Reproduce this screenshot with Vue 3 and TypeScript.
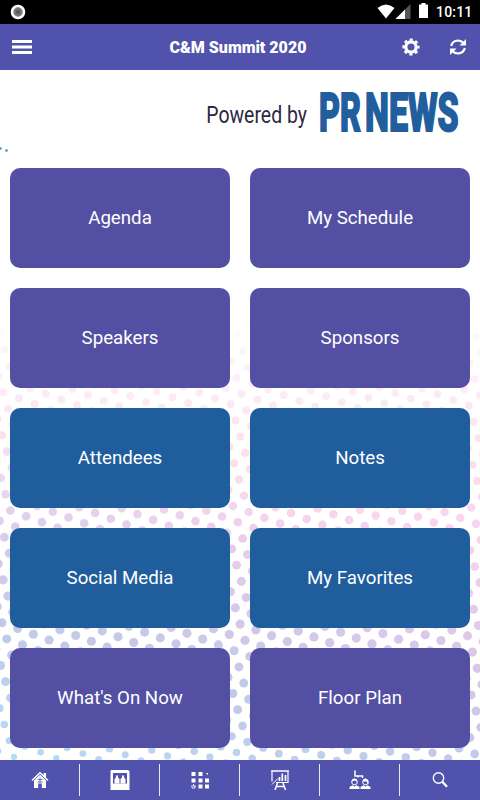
<script setup lang="ts">
interface Tile {
  label: string
  tone: 'violet' | 'blue'
}
interface Dot {
  x: number
  y: number
  r: number
  fill: string
  opacity: number
}

const tiles: Tile[] = [
  { label: 'Agenda', tone: 'violet' },
  { label: 'My Schedule', tone: 'violet' },
  { label: 'Speakers', tone: 'violet' },
  { label: 'Sponsors', tone: 'violet' },
  { label: 'Attendees', tone: 'blue' },
  { label: 'Notes', tone: 'blue' },
  { label: 'Social Media', tone: 'blue' },
  { label: 'My Favorites', tone: 'blue' },
  { label: "What's On Now", tone: 'violet' },
  { label: 'Floor Plan', tone: 'violet' },
]

// Piecewise linear interpolation over [position, ...values] stops.
function mix(stops: number[][], at: number): number[] {
  if (at <= stops[0][0]) return stops[0].slice(1)
  for (let i = 1; i < stops.length; i++) {
    const lo = stops[i - 1]
    const hi = stops[i]
    if (at <= hi[0]) {
      const t = (at - lo[0]) / (hi[0] - lo[0])
      return lo.slice(1).map((v, k) => v + (hi[k + 1] - v) * t)
    }
  }
  return stops[stops.length - 1].slice(1)
}

const hues = [
  [400, 249, 206, 234],
  [505, 220, 200, 233],
  [620, 193, 201, 232],
  [690, 188, 210, 239],
  [755, 178, 219, 246],
]
const fade = [[310, 0], [350, 0.2], [400, 0.45], [460, 0.65], [540, 0.93], [640, 1]]
const radii = [[310, 3.8], [400, 4], [500, 4.3], [600, 4.6], [690, 4.4], [720, 3.9], [760, 3]]

const dots: Dot[] = []
for (let i = -30; i <= 30; i++) {
  for (let j = -45; j <= 30; j++) {
    const x = 245 + i * 15.72 + j * 4.83
    const y = 640.3 + i * 5.8 + j * 16.2
    if (x < -6 || x > 486 || y < 310 || y > 766) continue
    const rgb = mix(hues, y - 0.3 * x).map(Math.round)
    dots.push({
      x,
      y,
      r: mix(radii, y - 0.12 * x)[0],
      fill: `rgb(${rgb.join(',')})`,
      opacity: mix(fade, y)[0],
    })
  }
}
</script>

<template>
  <div class="screen">
    <div class="status">
      <svg class="record" width="16" height="16" viewBox="0 0 16 16">
        <circle cx="8" cy="8" r="6" fill="#777" stroke="#fff" stroke-width="2.6" />
        <circle cx="8" cy="8" r="2" fill="#555" />
      </svg>
      <svg width="52" height="24" viewBox="0 0 52 24">
        <path d="M.5 8Q9 1 17.5 8L9 18.500Z" fill="#fff" />
        <path d="M33.500 4v15h-15Z" fill="#55555a" />
        <path d="M28 9.500v9.500h-9.500Z" fill="#fff" />
        <path d="M42 4.500h2.500v-1.500h4v1.500h2.500v13.500h-9Z" fill="#fff" />
      </svg>
      <span class="clock">10:11</span>
    </div>

    <header class="bar">
      <svg class="menu" width="20" height="14" viewBox="0 0 20 14">
        <path d="M0 0h20v3H0zM0 5.500h20v3H0zM0 11h20v3H0z" fill="#fff" />
      </svg>
      <h1>C&amp;M Summit 2020</h1>
      <div class="actions">
        <svg width="18" height="18" viewBox="0 0 18 18" fill="none" stroke="#fff">
          <circle cx="9" cy="9" r="5.200" stroke-width="3.200" />
          <circle cx="9" cy="9" r="7.400" stroke-width="2.400" stroke-dasharray="3.100 2.710" stroke-dashoffset="1.550" />
        </svg>
        <svg width="18" height="18" viewBox="0 0 18 18" fill="none" stroke="#fff" stroke-width="2.200">
          <path d="M2.200 8A7 6.600 0 0 1 14.500 5M15.800 10A7 6.600 0 0 1 3.500 13" />
          <path d="M17 1v6.500h-6.500ZM1 17v-6.500h6.500Z" fill="#fff" stroke="none" />
        </svg>
      </div>
    </header>

    <main class="body">
      <svg class="pattern" width="480" height="690" viewBox="0 70 480 690">
        <circle cx="0.500" cy="148.500" r="1.200" fill="#3d9abb" />
        <circle cx="6.500" cy="150.500" r="1.300" fill="#3f8fb8" />
        <circle v-for="(d, n) in dots" :key="n" :cx="d.x" :cy="d.y" :r="d.r" :fill="d.fill" :opacity="d.opacity" />
      </svg>

      <svg class="sponsor" width="480" height="98" viewBox="0 70 480 98">
        <text class="powered" transform="translate(206.300 122.500) scale(.81 1)">Powered by</text>
        <text class="brand" transform="translate(319 131) scale(.61 1)">PR</text>
        <text class="brand" transform="translate(365 131) scale(.64 1)">NEWS</text>
      </svg>

      <div class="grid">
        <div v-for="t in tiles" :key="t.label" class="tile" :class="t.tone">{{ t.label }}</div>
      </div>
    </main>

    <nav class="tabs">
      <div class="tab">
        <svg width="18" height="18" viewBox="0 0 18 18">
          <path d="M1 9.500 9 1.800l8 7.700" fill="none" stroke="#fff" stroke-width="1.500" />
          <path d="M12.500 2h2.500v5l-2.500-2.500ZM3 9.500l6-5.700 6 5.700V17h-4.200v-4.500H7.200V17H3Z" fill="#fff" />
          <path d="M6.500 8.500h5M9 6.500v5M6.500 11h5" stroke="#5052ab" stroke-width=".8" />
        </svg>
      </div>
      <div class="tab">
        <svg width="20" height="20" viewBox="0 0 20 20">
          <path d="M1 0h17l1.500 1.500V20H.5V1.500Z" fill="#fff" />
          <path d="M3 3h14v10.500H3Z" fill="#5052ab" />
          <path d="M4.500 13.500V9L6 7.500V5.500h2V7.500L9.500 9v4.500ZM10.500 13.500V9L12 7.500V5.500h2V7.500L15.500 9v4.500Z" fill="#fff" />
        </svg>
      </div>
      <div class="tab">
        <svg width="18" height="18" viewBox="0 0 18 18" fill="#fff">
          <path d="M.5 1h4v4h-4ZM7.500 1h4v4h-4ZM15.500 2h1.500v1.500h-1.500ZM.5 7.500h4v4h-4ZM7.500 7.500h4v4h-4ZM14 7.500h4v4h-4ZM7.500 13.500h4v4h-4ZM14 13.500h4v4h-4Z" />
          <path d="M1 14v3h3v-2.500M2.500 13v2h2" fill="none" stroke="#fff" stroke-width=".9" />
        </svg>
      </div>
      <div class="tab">
        <svg width="20" height="20" viewBox="0 0 20 20" fill="none" stroke="#fff">
          <path d="M2 11.500V1h16v11.500H6" stroke-width="1.200" />
          <path d="M1 1h18M2 14.500 8 8.500" stroke-width="1" />
          <path d="M9.500 11V7M12.300 11V3.500M15.500 11V5" stroke-width="1.700" />
          <path d="M7.500 13 5 20M13 13l2.500 7M6.500 16.500h7.500" stroke-width="1.500" />
        </svg>
      </div>
      <div class="tab">
        <svg width="22" height="20" viewBox="0 0 22 20" fill="none" stroke="#fff">
          <path d="M6 .5v5.500h7.500v2M9 6v1.500" stroke-width="1.500" />
          <circle cx="5.500" cy="12" r="2.800" stroke-width="1" />
          <circle cx="16.500" cy="12" r="2.800" stroke-width="1" />
          <path d="M2.800 11.500q0-3 2.700-3t2.700 3l-2.700-1ZM13.800 11.500q0-3 2.700-3t3 6l-2-3Z" fill="#fff" stroke="none" />
          <path d="M.5 19v-2l3-1.700 2 1.200 2-1.200 3 1.700v2ZM11.500 19v-2l3-1.700 2 1.200 2-1.200 3 1.700v2Z" fill="#fff" stroke="none" />
        </svg>
      </div>
      <div class="tab">
        <svg width="18" height="18" viewBox="0 0 18 18" fill="none" stroke="#fff">
          <circle cx="7.500" cy="7" r="5.200" stroke-width="1.400" />
          <path d="m11.300 10.800 4.700 5" stroke-width="2.200" />
        </svg>
      </div>
    </nav>
  </div>
</template>

<style>
body {
  margin: 0;
  background: #fff;
}
</style>

<style scoped>
.screen {
  width: 480px;
  height: 800px;
  display: flex;
  flex-direction: column;
  overflow: hidden;
  font-family: Roboto, "Liberation Sans", sans-serif;
  color: #fff;
}
svg {
  display: block;
  flex: none;
}
.status {
  height: 24px;
  background: #000;
  display: flex;
  align-items: center;
  padding: 0 7px 0 10px;
}
.record {
  margin-right: auto;
}
.clock {
  font-size: 14px;
  font-weight: 500;
  letter-spacing: 0.2px;
  width: 37px;
  margin-left: 7px;
  white-space: nowrap;
}
.bar {
  height: 46px;
  background: #5052ab;
  display: grid;
  grid-template-columns: 1fr auto 1fr;
  align-items: center;
  padding: 0 13px 0 12px;
}
h1 {
  margin: 0;
  padding: 2px 3px 0 0;
  font-size: 16px;
  font-weight: 900;
  line-height: 20px;
}
.actions {
  display: flex;
  justify-content: flex-end;
  gap: 29px;
}
.body {
  position: relative;
  flex: 1;
  background: #fff;
}
.pattern {
  position: absolute;
  inset: 0;
}
.sponsor {
  position: relative;
}
.powered {
  font-size: 24px;
  font-weight: 400;
  fill: #2c2842;
}
.brand {
  font-size: 53px;
  font-weight: 800;
  fill: #205e9d;
  stroke: #205e9d;
  stroke-width: 2px;
}
.grid {
  position: relative;
  display: grid;
  grid-template-columns: 1fr 1fr;
  grid-auto-rows: 100px;
  gap: 20px;
  padding: 0 10px;
}
.tile {
  display: flex;
  align-items: center;
  justify-content: center;
  border-radius: 10px;
  font-size: 18.7px;
}
.violet {
  background: #5350a4;
}
.blue {
  background: #205d9d;
}
.tabs {
  height: 40px;
  background: #5052ab;
  display: grid;
  grid-template-columns: repeat(6, 1fr);
  align-items: center;
}
.tab {
  height: 32px;
  display: flex;
  align-items: center;
  justify-content: center;
  border-right: 1px solid #e8e8f6;
}
.tab:last-child {
  border-right: 0;
}
</style>
